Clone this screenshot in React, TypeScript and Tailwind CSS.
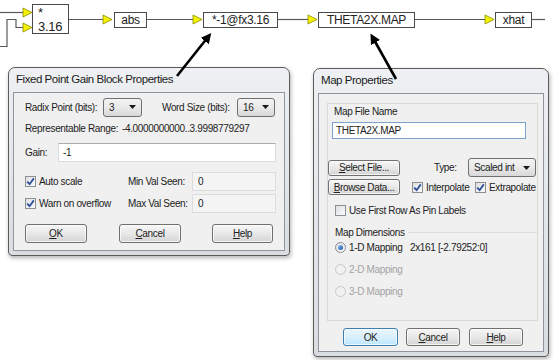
import type { ReactNode } from 'react'

const uiFont = "font-['Liberation_Sans',Arial,sans-serif] whitespace-nowrap"

const Combo = ({ value, className }: { value: string; className: string }) => (
  <div className={`${className} h-[19px] flex items-center justify-between pl-[5px] pr-[5px] rounded-[3px] border border-[#707070] bg-gradient-to-b from-[#f3f3f3] via-[#e9e9e9] to-[#d8d8d8]`}>
    <span>{value}</span>
    <svg width="7" height="4" viewBox="0 0 7 4">
      <path d="M0 0 L7 0 L3.5 4 Z" fill="#1a1a1a" />
    </svg>
  </div>
)

const Btn = ({ children, className, primary }: { children: ReactNode; className: string; primary?: boolean }) => (
  <div
    className={`${className} flex items-center justify-center rounded-[3px] border ${
      primary
        ? 'border-[#3c7fb1] bg-gradient-to-b from-[#eaf6fd] via-[#d9f0fc] to-[#bee6fd]'
        : 'border-[#707070] bg-gradient-to-b from-[#f6f6f6] via-[#e8e8e8] to-[#d4d4d4]'
    } shadow-[inset_0_0_0_1px_rgba(255,255,255,0.7)]`}
  >
    {children}
  </div>
)

const Check = ({ label, checked, className }: { label: string; checked?: boolean; className?: string }) => (
  <div className={`${className ?? ''} flex items-center`}>
    <span className="w-[11px] h-[11px] shrink-0 border border-[#8e8f8f] bg-gradient-to-br from-[#dcdfe3] to-[#fbfbfb] flex items-center justify-center">
      {checked && (
        <svg width="9" height="9" viewBox="0 0 9 9">
          <path d="M1.2 4.6 L3.6 7.2 L7.8 1.4" stroke="#2f4f9a" strokeWidth="1.8" fill="none" />
        </svg>
      )}
    </span>
    <span className="ml-[3px]">{label}</span>
  </div>
)

const Radio = ({ label, checked, disabled, className }: { label: string; checked?: boolean; disabled?: boolean; className?: string }) => (
  <div className={`${className ?? ''} flex items-center ${disabled ? 'text-[#a3a3a3]' : ''}`}>
    <span className={`w-[11px] h-[11px] shrink-0 rounded-full border ${disabled ? 'border-[#c8c8c8] bg-[#f1f1f1]' : 'border-[#8a8a8a] bg-gradient-to-br from-[#dcdfe3] to-[#fbfbfb]'} flex items-center justify-center`}>
      {checked && <span className="w-[5px] h-[5px] rounded-full bg-gradient-to-br from-[#8cc4f4] to-[#1a4fa0]" />}
    </span>
    <span className="ml-[3px]">{label}</span>
  </div>
)

const Dialog = ({ title, className, children }: { title: string; className: string; children: ReactNode }) => (
  <div className={`absolute ${className} flex flex-col rounded-t-[7px] rounded-b-[4px] border border-[#5b5b5b] bg-gradient-to-b from-[#eef0f3] to-[#d9dde2] px-[4px] pb-[4px] shadow-[1px_2px_4px_rgba(0,0,0,0.3)]`}>
    <div className="h-[24px] flex items-center pl-[3px] text-[11.5px] tracking-[-0.45px] text-[#1b1b1b]">{title}</div>
    <div className="flex-1 border border-[#8f959d] bg-[#f0f0f0]">{children}</div>
  </div>
)

const Block = ({ className, children }: { className: string; children: ReactNode }) => (
  <div className={`absolute ${className} border border-[#4a4a4a] bg-white flex items-center justify-center text-[12px] leading-[14px] tracking-[-0.3px] text-[#222]`}>
    {children}
  </div>
)

const tris = [
  [23, 12.5],
  [23, 27.5],
  [103, 19.5],
  [193, 19.5],
  [308, 19.5],
  [485, 19.5],
]

export default function App() {
  return (
    <div className={`relative w-[554px] h-[360px] overflow-hidden bg-white ${uiFont}`}>
      {/* diagram wires */}
      <svg className="absolute inset-0" width="554" height="360">
        <g stroke="#5a5a5a" strokeWidth="1.2" fill="none">
          <path d="M0 12.5 H23" />
          <path d="M0 46.5 H7 V19.5 H16 V27.5 H23" />
          <path d="M69 19.5 H103" />
          <path d="M147 19.5 H193" />
          <path d="M278 19.5 H308" />
          <path d="M415 19.5 H485" />
          <path d="M532 19.5 H545" />
        </g>
        {tris.map(([x, y]) => (
          <path key={`${x}-${y}`} d={`M${x} ${y - 4.5} L${x + 9} ${y} L${x} ${y + 4.5} Z`} fill="#f4f400" stroke="#8a8a00" strokeWidth="0.8" />
        ))}
      </svg>

      <div className="absolute left-[32px] top-[4px] w-[37px] h-[30px] border border-[#4a4a4a] bg-white flex flex-col pl-[5px] pt-[1px] text-[13px] leading-[14px] tracking-[-0.3px] text-[#222]">
        <span>*</span>
        <span>3.16</span>
      </div>
      <Block className="left-[114px] top-[12px] w-[33px] h-[16px]">abs</Block>
      <Block className="left-[203px] top-[12px] w-[75px] h-[16px]">*-1@fx3.16</Block>
      <Block className="left-[318px] top-[12px] w-[97px] h-[16px]">THETA2X.MAP</Block>
      <Block className="left-[495px] top-[12px] w-[37px] h-[16px]">xhat</Block>

      {/* Fixed point gain dialog */}
      <Dialog title="Fixed Point Gain Block Properties" className="left-[8px] top-[67px] w-[282px] h-[189px]">
        <div className="flex flex-col pl-[11px] pr-[8px] pt-[4px] text-[10px] tracking-[-0.35px] text-[#222]">
          <div className="flex items-center h-[20px]">
            <span className="w-[78px]">Radix Point (bits):</span>
            <Combo value="3" className="w-[39px]" />
            <span className="ml-[20px] w-[75px]">Word Size (bits):</span>
            <Combo value="16" className="w-[38px]" />
          </div>
          <div className="flex items-center h-[20px] mt-[1px]">
            <span className="w-[94px] shrink-0">Representable Range:</span>
            <span className="ml-[3px]">-4.0000000000..3.9998779297</span>
          </div>
          <div className="flex items-center h-[19px] mt-[5px]">
            <span className="w-[33px]">Gain:</span>
            <div className="flex-1 h-[19px] border border-[#d9dbdf] border-t-[#abadb3] bg-white flex items-center pl-[4px]">-1</div>
          </div>
          <div className="flex items-center h-[19px] mt-[10px]">
            <Check label="Auto scale" checked className="w-[103px]" />
            <span className="w-[64px]">Min Val Seen:</span>
            <div className="flex-1 h-[19px] border border-[#dcdcdc] bg-[#f4f4f4] flex items-center pl-[5px]">0</div>
          </div>
          <div className="flex items-center h-[19px] mt-[3px]">
            <Check label="Warn on overflow" checked className="w-[103px]" />
            <span className="w-[64px]">Max Val Seen:</span>
            <div className="flex-1 h-[19px] border border-[#dcdcdc] bg-[#f4f4f4] flex items-center pl-[5px]">0</div>
          </div>
          <div className="flex items-center mt-[11px]">
            <Btn className="w-[62px] h-[19px]"><span><u>O</u>K</span></Btn>
            <Btn className="ml-[32px] w-[62px] h-[19px]"><span><u>C</u>ancel</span></Btn>
            <Btn className="ml-[31px] w-[61px] h-[19px]"><span><u>H</u>elp</span></Btn>
          </div>
        </div>
      </Dialog>

      {/* Map properties dialog */}
      <Dialog title="Map Properties" className="left-[313px] top-[68px] w-[236px] h-[289px]">
        <div className="flex flex-col pt-[9px] pl-[8px] text-[10px] tracking-[-0.35px] text-[#222]">
          <div className="w-[211px] h-[218px] border border-[#d9d9d9] flex flex-col">
            <div className="pl-[6px] mt-[1px] h-[14px] leading-[14px]">Map File Name</div>
            <div className="ml-[4px] mt-[3px] w-[194px] h-[17px] border border-[#7da2ce] bg-white flex items-center pl-[3px]">THETA2X.MAP</div>
            <div className="mt-[19px] h-[19px] flex items-center">
              <Btn className="w-[72px] h-[16px]"><span><u>S</u>elect File...</span></Btn>
              <span className="ml-[34px] w-[34px]">Type:</span>
              <Combo value="Scaled int" className="w-[68px]" />
            </div>
            <div className="mt-[2px] h-[16px] flex items-center">
              <Btn className="w-[72px] h-[16px]"><span><u>B</u>rowse Data...</span></Btn>
              <Check label="Interpolate" checked className="ml-[12px] w-[63px]" />
              <Check label="Extrapolate" checked />
            </div>
            <Check label="Use First Row As Pin Labels" className="ml-[7px] mt-[9px] h-[12px]" />
            <div className="mt-[10px] h-[12px] flex items-center pl-[7px]">
              <span>Map Dimensions</span>
              <span className="flex-1 ml-[3px] border-t border-[#dcdcdc]" />
            </div>
            <div className="mt-[3px] h-[12px] flex items-center pl-[7px]">
              <Radio label="1-D Mapping" checked className="w-[75px]" />
              <span>2x161 [-2.79252:0]</span>
            </div>
            <Radio label="2-D Mapping" disabled className="mt-[10px] h-[12px] pl-[7px]" />
            <Radio label="3-D Mapping" disabled className="mt-[10px] h-[12px] pl-[7px]" />
          </div>
          <div className="mt-[7px] flex items-center pl-[16px]">
            <Btn primary className="w-[55px] h-[18px]"><span>OK</span></Btn>
            <Btn className="ml-[8px] w-[54px] h-[18px]"><span><u>C</u>ancel</span></Btn>
            <Btn className="ml-[9px] w-[54px] h-[18px]"><span><u>H</u>elp</span></Btn>
          </div>
        </div>
      </Dialog>

      {/* callout arrows */}
      <svg className="absolute inset-0 pointer-events-none" width="554" height="360">
        <defs>
          <marker id="head" markerWidth="4" markerHeight="4" refX="2" refY="2" orient="auto">
            <path d="M0 0 L4 2 L0 4 Z" fill="#000" />
          </marker>
        </defs>
        <path d="M177 76 L208 37" stroke="#000" strokeWidth="2.6" markerEnd="url(#head)" />
        <path d="M396 79 L373 38" stroke="#000" strokeWidth="2.6" markerEnd="url(#head)" />
      </svg>
    </div>
  )
}
